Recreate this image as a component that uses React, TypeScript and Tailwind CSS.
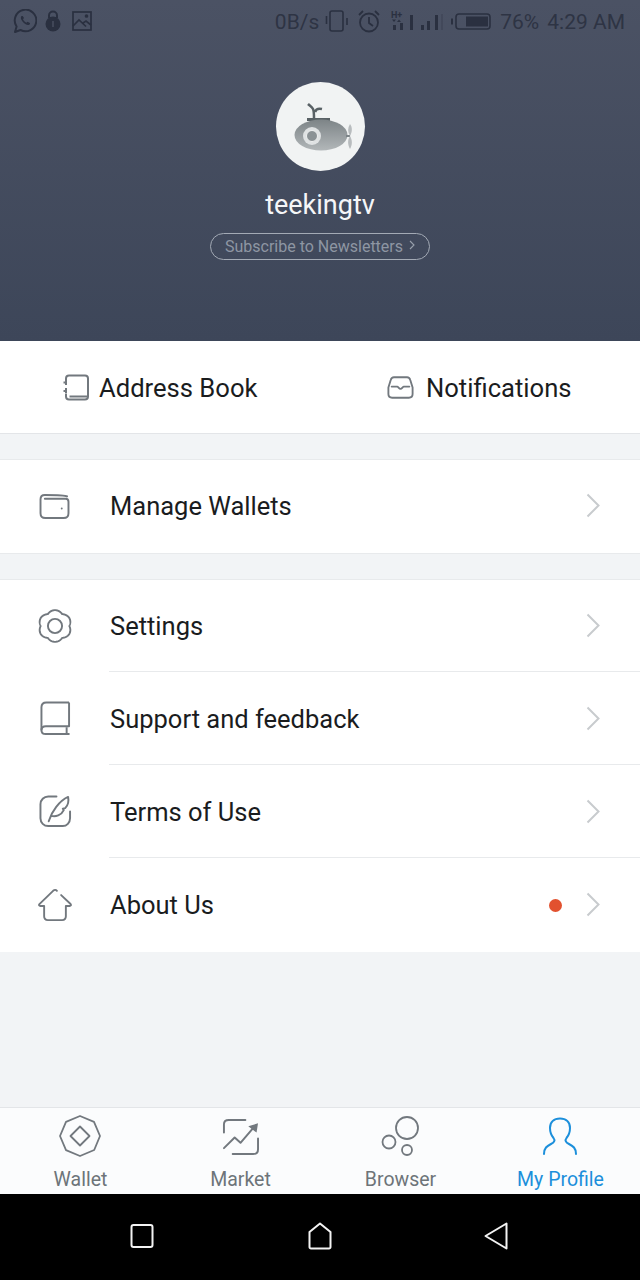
import React from "react";

const G = "#72787e";

const gearPath = (() => {
  const pts: string[] = [];
  for (let i = 0; i < 180; i++) {
    const t = (i / 180) * Math.PI * 2;
    const r = 14.6 + 2.2 * Math.abs(Math.cos(3 * (t - Math.PI / 2)));
    pts.push(`${(18 + 1.04 * r * Math.cos(t)).toFixed(2)} ${(18 + r * Math.sin(t)).toFixed(2)}`);
  }
  return `M${pts.join("L")}Z`;
})();

function Chevron() {
  return (
    <svg width="15" height="25" viewBox="0 0 15 25" fill="none" stroke="#c8cbce" strokeWidth="2" className="mb-[2px] shrink-0">
      <path d="M1.500 1.500l11 11-11 11" />
    </svg>
  );
}

function Gear() {
  return (
    <svg width="36" height="36" viewBox="0 0 36 36" fill="none" stroke={G} strokeWidth="2" strokeLinejoin="round" className="mb-[2px]">
      <path d={gearPath} />
      <circle cx="18" cy="18" r="7.500" />
    </svg>
  );
}

function WalletIcon() {
  return (
    <svg width="31" height="27" viewBox="0 0 32 28" fill="none" stroke={G} strokeWidth="2" strokeLinecap="round" className="mr-[2px]">
      <path d="M29 3.500C27 2 9 2 6 2 3.500 2 1.500 3.500 1.500 6.500V21c0 3 2 5 5 5h19c3 0 5-2 5-5V9c0-2-1-3-3-3H6" />
      <circle cx="23.500" cy="16" r="1" fill={G} stroke="none" />
    </svg>
  );
}

function BookIcon() {
  return (
    <svg width="31" height="35" viewBox="0 0 32 36" fill="none" stroke={G} strokeWidth="2" strokeLinejoin="round" className="mb-[2px]">
      <path d="M30 1.500H6.500c-3 0-5 2-5 5V30" />
      <path d="M30 1.500V26H6c-3 0-4.500 1.800-4.500 4s1.500 4 4.500 4h24.500" />
      <path d="M27.500 27v7" />
    </svg>
  );
}

function QuillIcon() {
  return (
    <svg width="33" height="33" viewBox="0 0 34 34" fill="none" stroke={G} strokeWidth="2" strokeLinecap="round" strokeLinejoin="round" className="mb-[2px]">
      <path d="M18 1.500H9.500c-4.500 0-8 3.500-8 8V24c0 4.500 3.500 8 8 8H24.500c4 0 7.500-3.500 7.500-8V17" />
      <path d="M10 27C13 17 21 6 30 2c1 5-.5 9-3 11.500l-2.500.5 1 1.500C23 21 17 22.500 13 21.500" />
    </svg>
  );
}

function HouseIcon() {
  return (
    <svg width="36" height="34" viewBox="0 0 36 34" fill="none" stroke={G} strokeWidth="2" strokeLinecap="round" strokeLinejoin="round" className="mb-[2px]">
      <path d="M24.500 6.500L34.500 16c.8 1 .3 2-1 2H29.500v11c0 2.500-1.500 4-4 4H10.500c-2.500 0-4-1.500-4-4V18H2.500c-1.300 0-1.800-1-1-2L16 2c1.500-1.300 3-1.300 4 0" />
    </svg>
  );
}

function Row({ icon, label, border = true, dot = false }: { icon: React.ReactNode; label: string; border?: boolean; dot?: boolean }) {
  return (
    <div className="flex h-[93px] items-start bg-white">
      <div className="flex h-[93px] w-[109px] shrink-0 items-center pl-[38px]">
        <div className="flex w-[34px] justify-center">{icon}</div>
      </div>
      <div className={`flex h-[92px] flex-1 items-center pr-[39px] pt-[1px] ${border ? "border-b border-[#e8eaec]" : ""}`}>
        <span className="flex-1 pl-[1px] text-[25.500px] text-[#1a1c1e]">{label}</span>
        {dot && <span className="mr-[24px] h-[13px] w-[13px] rounded-full bg-[#e2512f]" />}
        <Chevron />
      </div>
    </div>
  );
}

function Tab({ icon, label, active = false }: { icon: React.ReactNode; label: string; active?: boolean }) {
  return (
    <div className="flex flex-1 flex-col items-center pt-[6px]">
      <div className="flex h-[44px] items-center justify-center">{icon}</div>
      <span className={`mt-[9px] pl-[1px] text-[19.500px] leading-[26px] ${active ? "text-[#1c8fdb]" : "text-[#6d7479]"}`}>{label}</span>
    </div>
  );
}

function StatusBar() {
  const c = "#2a3040";
  return (
    <div className="flex h-[42px] items-center justify-between pl-[13px] pr-[15px] text-[21px] text-[#2e3444]">
      <div className="flex items-center gap-[8px]">
        <svg width="24" height="24" viewBox="0 0 24 24" fill="none" stroke={c} strokeWidth="2">
          <path d="M2 23l1.600-5.500A10.800 10.800 0 1 1 7.500 21L2 23z" strokeLinejoin="round" />
          <path d="M8.500 7c-1 1-1 3 1 5.500 2 2.500 4.500 4 6.200 3.500 1-.3 1.300-1 1.300-2l-2.500-1.300-1.200 1c-1.500-.7-2.700-2-3.300-3.500l1-1.200L9.700 7h-1.200z" fill={c} stroke="none" />
        </svg>
        <svg width="16" height="22" viewBox="0 0 16 22" fill={c}>
          <path d="M4 8V5.500a4 4 0 0 1 8 0V8" fill="none" stroke={c} strokeWidth="2" />
          <circle cx="8" cy="14" r="7.500" />
          <rect x="7.300" y="11" width="1.400" height="6" fill="#4a5162" />
        </svg>
        <svg width="20" height="20" viewBox="0 0 20 20" fill="none" stroke={c} strokeWidth="1.700" className="ml-[3px]">
          <rect x="1" y="1" width="18" height="18" />
          <path d="M1 15l6-6 7 6.500M11 12l3-2 5 4" />
          <circle cx="14.500" cy="5" r="1" fill={c} />
        </svg>
      </div>
      <div className="flex items-center">
        <span className="mt-[2px] leading-none">0B/s</span>
        <svg width="24" height="24" viewBox="0 0 24 24" fill="none" stroke={c} strokeWidth="1.600" className="ml-[6px]">
          <rect x="5" y="2" width="13" height="20" rx="2" />
          <path d="M1.500 7v8M22 9v7" />
        </svg>
        <svg width="24" height="24" viewBox="0 0 24 24" fill="none" stroke={c} strokeWidth="1.800" className="ml-[8px]">
          <circle cx="12" cy="13.500" r="9" />
          <path d="M12 8v6l4 3M2 6l4-4M22 6l-4-4" />
        </svg>
        <svg width="52" height="24" viewBox="0 0 52 24" fill={c} className="ml-[10px]">
          <text x="0" y="9" fontSize="9" fontFamily="Roboto, sans-serif" fontWeight="700" fill={c}>H+</text>
          <path d="M1 10.500l2 2.500 2-2.500zM6 13l2-2.500 2 2.500z" />
          <rect x="2" y="16" width="3" height="5" />
          <rect x="9" y="14" width="3" height="7" />
          <rect x="19" y="6" width="3" height="15" />
          <rect x="30" y="16" width="3" height="5" />
          <rect x="36" y="12" width="3" height="9" />
          <rect x="44" y="6" width="3" height="15" />
          <rect x="50" y="5" width="2" height="16" opacity="0.25" />
        </svg>
        <svg width="40" height="17" viewBox="0 0 40 17" fill="none" className="ml-[8px]">
          <rect x="0" y="5.500" width="2" height="6" fill={c} />
          <rect x="5" y="1" width="34" height="15" rx="3" stroke={c} strokeWidth="1.600" />
          <rect x="15" y="3.500" width="22" height="10" fill={c} />
        </svg>
        <span className="ml-[9px] mt-[2px] leading-none">76%</span>
        <span className="ml-[8px] mt-[2px] leading-none">4:29 AM</span>
      </div>
    </div>
  );
}

export default function App() {
  return (
    <div className="flex h-[1280px] w-[640px] flex-col overflow-hidden bg-[#f2f4f6] font-['Roboto',sans-serif]">
      <div className="flex h-[341px] flex-col bg-gradient-to-b from-[#4b5264] to-[#3d4659]">
        <StatusBar />
        <div className="flex flex-col items-center pt-[40px]">
          <div className="flex h-[89px] w-[89px] items-center justify-center rounded-full bg-[#f1f3f3]">
            <svg width="60" height="50" viewBox="0 0 60 50" className="ml-[8px]">
              <defs>
                <linearGradient id="sub" x1="0" y1="0" x2="0" y2="1">
                  <stop offset="0" stopColor="#7d8487" />
                  <stop offset="1" stopColor="#b2b7b9" />
                </linearGradient>
              </defs>
              <path d="M20 16c0-5 0-7-1-9-1-2-3-3-5-5M21 10c1-3 3-4 7-3" fill="none" stroke="#596165" strokeWidth="2.500" />
              <path d="M13 16h23v3H13z" fill="#596165" />
              <ellipse cx="27" cy="33" rx="26.500" ry="15.500" fill="url(#sub)" />
              <circle cx="18" cy="34" r="9" fill="#dfe2e3" />
              <circle cx="18" cy="34" r="5.500" fill="#8b9295" stroke="#eef0f0" strokeWidth="1" />
              <path d="M52 34h4" stroke="#7c8488" strokeWidth="2" />
              <path d="M56 34c-2.500-4-2.500-8 0-12 2.500 3 2.500 8 0 12zM56 34c-2.500 4-2.500 8 0 13 2.500-4 2.500-9 0-13z" fill="#b8bcbe" />
            </svg>
          </div>
          <div className="mt-[16px] text-[27px] leading-[36px] text-[#f5f6f8]">teekingtv</div>
          <div className="mt-[10px] flex h-[27px] w-[220px] items-center justify-center gap-[6px] rounded-full border border-[#a3aab5] text-[16px] text-[#8e96a3]">
            <span>Subscribe to Newsletters</span>
            <svg width="6" height="10" viewBox="0 0 6 10" fill="none" stroke="#98a0ac" strokeWidth="1.100" className="mb-[3px]">
              <path d="M1 1l4 4-4 4" />
            </svg>
          </div>
        </div>
      </div>

      <div className="flex h-[93px] border-b border-[#e3e5e8] bg-white">
        <div className="flex w-[320px] items-center pl-[62px]">
          <svg width="27" height="27" viewBox="0 0 27 27" fill="none" stroke={G} strokeWidth="2" strokeLinejoin="round">
            <path d="M4 6V4.500C4 2.500 5 1.500 7 1.500h16c2 0 3 1 3 3v18c0 2-1 3-3 3H7c-2 0-3-1-3-3v-3" />
            <path d="M4 6v5M4 14v5M1.500 8.500H4M1.500 17H4M7.500 22.500h18" />
          </svg>
          <span className="ml-[10px] pt-[2px] text-[25.600px] text-[#1a1c1e]">Address Book</span>
        </div>
        <div className="flex w-[320px] items-center pl-[67px]">
          <svg width="27" height="23" viewBox="0 0 29 24" fill="none" stroke={G} strokeWidth="2" strokeLinecap="round" strokeLinejoin="round">
            <path d="M1.500 12L4 4c.5-2 1.500-3 3.500-3h14c2 0 3 1 3.500 3l2.500 8v7c0 2.500-1.500 4-4 4h-18c-2.500 0-4-1.500-4-4v-7z" />
            <path d="M5 11h6c1 0 2 2.500 3.500 2.500S17 11 18 11h6" />
          </svg>
          <span className="ml-[12px] pt-[2px] text-[25.600px] text-[#1a1c1e]">Notifications</span>
        </div>
      </div>

      <div className="mt-[25px] border-y border-[#e8eaec]">
        <Row icon={<WalletIcon />} label="Manage Wallets" border={false} />
      </div>

      <div className="mt-[25px] border-t border-[#e8eaec]">
        <Row icon={<Gear />} label="Settings" />
        <Row icon={<BookIcon />} label="Support and feedback" />
        <Row icon={<QuillIcon />} label="Terms of Use" />
        <Row icon={<HouseIcon />} label="About Us" border={false} dot />
      </div>

      <div className="flex-1" />

      <div className="flex h-[87px] border-t border-[#e3e5e8] bg-[#fbfcfd]">
        <Tab
          label="Wallet"
          icon={
            <svg width="42" height="42" viewBox="0 0 42 42" fill="none" stroke={G} strokeWidth="1.800" strokeLinejoin="round">
              <path d="M21 1l14 5.800L41 21l-5.800 14L21 41 7 35.200 1 21 7 6.800z" />
              <path d="M21 11.500L30.500 21 21 30.500 11.500 21z" />
            </svg>
          }
        />
        <Tab
          label="Market"
          icon={
            <svg width="37" height="37" viewBox="0 0 38 38" fill="none" stroke={G} strokeWidth="2" strokeLinecap="round" strokeLinejoin="round">
              <path d="M24 2H7C4 2 2 3.500 2 6.500V15M37 21v11c0 3-2 5-5 5H11" />
              <path d="M2 31l11-11 6 5.500L31.500 11" />
              <path d="M27 8.500L37 5.500 35.500 15z" fill={G} stroke="none" />
            </svg>
          }
        />
        <Tab
          label="Browser"
          icon={
            <svg width="38" height="40" viewBox="0 0 38 40" fill="none" stroke={G} strokeWidth="1.800">
              <circle cx="26" cy="12" r="11" />
              <circle cx="8" cy="26" r="6.500" />
              <circle cx="26" cy="34" r="5" />
            </svg>
          }
        />
        <Tab
          active
          label="My Profile"
          icon={
            <svg width="36" height="38" viewBox="0 0 36 38" fill="none" stroke="#1c8fdb" strokeWidth="2" strokeLinecap="round">
              <path d="M2 37c0-6 3-8 7-10 4-2 4-4 2.500-6C9 18 8 15 8 11 8 5 12 1.500 18 1.500S28 5 28 11c0 4-1 7-3.500 10-1.500 2-1.500 4 2.500 6 4 2 7 4 7 10" />
            </svg>
          }
        />
      </div>

      <div className="flex h-[86px] items-center justify-between bg-black pb-[2px] pl-[130px] pr-[132px]">
        <svg width="24" height="26" viewBox="0 0 24 26" fill="none" stroke="#f3f3f3" strokeWidth="2" strokeLinejoin="round">
          <rect x="1.500" y="2" width="21" height="22" rx="2" />
        </svg>
        <svg width="24" height="28" viewBox="0 0 24 28" fill="none" stroke="#f3f3f3" strokeWidth="2" strokeLinejoin="round" className="ml-[1px]">
          <path d="M12 1.500L22.500 10v15a1.500 1.500 0 0 1-1.500 1.500H3A1.500 1.500 0 0 1 1.500 25V10z" />
        </svg>
        <svg width="24" height="28" viewBox="0 0 24 28" fill="none" stroke="#f3f3f3" strokeWidth="2" strokeLinejoin="round">
          <path d="M22.500 1.500v25L1.500 14z" />
        </svg>
      </div>
    </div>
  );
}
